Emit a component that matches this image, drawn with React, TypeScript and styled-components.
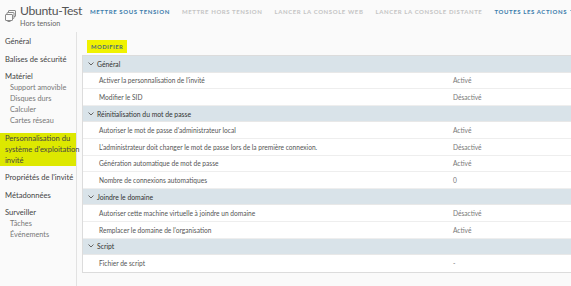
import React from "react"
import styled, { createGlobalStyle } from "styled-components"

const GlobalStyle = createGlobalStyle`
  html, body {
    margin: 0;
    padding: 0;
    background: #fafafa;
    font-family: Lato, "Noto Sans", sans-serif;
    color: #565656;
  }
`

type Row = { label: string; value: string }
type Group = { title: string; rows: Row[] }

const groups: Group[] = [
  {
    title: "Général",
    rows: [
      { label: "Activer la personnalisation de l'invité", value: "Activé" },
      { label: "Modifier le SID", value: "Désactivé" },
    ],
  },
  {
    title: "Réinitialisation du mot de passe",
    rows: [
      { label: "Autoriser le mot de passe d'administrateur local", value: "Activé" },
      { label: "L'administrateur doit changer le mot de passe lors de la première connexion.", value: "Désactivé" },
      { label: "Génération automatique de mot de passe", value: "Activé" },
      { label: "Nombre de connexions automatiques", value: "0" },
    ],
  },
  {
    title: "Joindre le domaine",
    rows: [
      { label: "Autoriser cette machine virtuelle à joindre un domaine", value: "Désactivé" },
      { label: "Remplacer le domaine de l'organisation", value: "Activé" },
    ],
  },
  {
    title: "Script",
    rows: [{ label: "Fichier de script", value: "-" }],
  },
]

const actions = [
  { label: "METTRE SOUS TENSION", active: true },
  { label: "METTRE HORS TENSION", active: false },
  { label: "LANCER LA CONSOLE WEB", active: false },
  { label: "LANCER LA CONSOLE DISTANTE", active: false },
]

const VmIcon = () => (
  <svg width="11" height="12" viewBox="0 0 11 12" fill="none" stroke="#8a8a8a" strokeWidth="1">
    <rect x="3.5" y="0.5" width="7" height="6" rx="0.5" />
    <rect x="2" y="2.5" width="7" height="6" rx="0.5" fill="#fafafa" />
    <rect x="0.5" y="4.5" width="7" height="6" rx="0.5" fill="#fafafa" />
    <line x1="2.5" y1="11.5" x2="5.5" y2="11.5" />
  </svg>
)

const Chevron = ({ color }: { color: string }) => (
  <svg width="6" height="4" viewBox="0 0 6 4" fill="none" stroke={color} strokeWidth="1">
    <polyline points="0.5,0.5 3,3 5.5,0.5" />
  </svg>
)

export default function App() {
  return (
    <S.Page>
      <GlobalStyle />
      <S.Header>
        <S.TitleBlock>
          <S.IconWrap>
            <VmIcon />
          </S.IconWrap>
          <div>
            <S.Title>Ubuntu-Test</S.Title>
            <S.Subtitle>Hors tension</S.Subtitle>
          </div>
        </S.TitleBlock>
        <S.Actions>
          {actions.map((a) => (
            <S.Action key={a.label} active={a.active}>
              {a.label}
            </S.Action>
          ))}
          <S.Action active>
            TOUTES LES ACTIONS <Chevron color="#3b7cab" />
          </S.Action>
        </S.Actions>
      </S.Header>
      <S.Body>
        <S.Sidebar>
          <S.NavItem>Général</S.NavItem>
          <S.NavItem>Balises de sécurité</S.NavItem>
          <S.NavGroup>
            <S.NavItem>Matériel</S.NavItem>
            <S.SubItem>Support amovible</S.SubItem>
            <S.SubItem>Disques durs</S.SubItem>
            <S.SubItem>Calculer</S.SubItem>
            <S.SubItem>Cartes réseau</S.SubItem>
          </S.NavGroup>
          <S.NavItem selected>
            Personnalisation du
            <br />
            système d'exploitation
            <br />
            invité
          </S.NavItem>
          <S.NavItem>Propriétés de l'invité</S.NavItem>
          <S.NavItem>Métadonnées</S.NavItem>
          <S.NavGroup>
            <S.NavItem>Surveiller</S.NavItem>
            <S.SubItem>Tâches</S.SubItem>
            <S.SubItem>Événements</S.SubItem>
          </S.NavGroup>
        </S.Sidebar>
        <S.Content>
          <S.EditButton>MODIFIER</S.EditButton>
          <S.Table>
            {groups.map((g) => (
              <React.Fragment key={g.title}>
                <S.GroupRow>
                  <Chevron color="#666" />
                  <span>{g.title}</span>
                </S.GroupRow>
                {g.rows.map((r) => (
                  <S.DataRow key={r.label}>
                    <S.Label>{r.label}</S.Label>
                    <S.Value>{r.value}</S.Value>
                  </S.DataRow>
                ))}
              </React.Fragment>
            ))}
          </S.Table>
        </S.Content>
      </S.Body>
    </S.Page>
  )
}

const S = {
  Page: styled.div`
    width: 571px;
    height: 286px;
    overflow: hidden;
    background: #fafafa;
  `,
  Header: styled.div`
    display: flex;
    align-items: flex-start;
    height: 32px;
    padding: 3px 0 0 5px;
    box-sizing: border-box;
  `,
  TitleBlock: styled.div`
    display: flex;
    align-items: flex-start;
    gap: 4px;
    width: 85px;
    flex-shrink: 0;
  `,
  IconWrap: styled.div`
    padding-top: 3px;
  `,
  Title: styled.div`
    font-size: 12.2px;
    letter-spacing: -0.35px;
    line-height: 15px;
    color: #555;
    white-space: nowrap;
  `,
  Subtitle: styled.div`
    font-size: 7.2px;
    line-height: 10px;
    margin-top: 1px;
    color: #666;
  `,
  Actions: styled.div`
    display: flex;
    align-items: center;
    gap: 12px;
    padding-top: 5px;
    white-space: nowrap;
  `,
  Action: styled.div<{ active: boolean }>`
    display: flex;
    align-items: center;
    gap: 3px;
    font-size: 6px;
    font-weight: 700;
    letter-spacing: 0.6px;
    color: ${({ active }) => (active ? "#3b7cab" : "#c4c4c4")};
  `,
  Body: styled.div`
    display: flex;
    height: 254px;
  `,
  Sidebar: styled.div`
    width: 77px;
    flex-shrink: 0;
    border-right: 1px solid #e2e2e2;
    padding-top: 4px;
    display: flex;
    flex-direction: column;
    gap: 6.5px;
    box-sizing: border-box;
  `,
  NavGroup: styled.div`
    display: flex;
    flex-direction: column;
  `,
  NavItem: styled.div<{ selected?: boolean }>`
    font-size: 7.6px;
    line-height: 11px;
    white-space: nowrap;
    padding: 0 5px;
    color: #444;
    background: ${({ selected }) => (selected ? "#dde800" : "transparent")};
  `,
  SubItem: styled.div`
    font-size: 7.3px;
    line-height: 11px;
    padding-left: 10px;
    color: #777;
  `,
  Content: styled.div`
    flex: 1;
    padding: 8px 0 0 5px;
    display: flex;
    flex-direction: column;
    align-items: flex-start;
  `,
  EditButton: styled.div`
    margin-left: 5px;
    background: #f0f200;
    color: #4a6b78;
    font-size: 5.8px;
    font-weight: 700;
    letter-spacing: 0.5px;
    padding: 3px 4px;
    line-height: 7px;
  `,
  Table: styled.div`
    margin-top: 2px;
    width: 100%;
    border: 1px solid #dcdcdc;
    border-right: none;
    background: #fff;
  `,
  GroupRow: styled.div`
    display: flex;
    align-items: center;
    gap: 3px;
    height: 16.6px;
    padding-left: 5px;
    background: #d9e3e9;
    font-size: 6.8px;
    color: #333;
    border-bottom: 1px solid #e8e8e8;
    box-sizing: border-box;
  `,
  DataRow: styled.div`
    display: flex;
    align-items: center;
    height: 16.6px;
    padding-left: 16px;
    border-bottom: 1px solid #eeeeee;
    box-sizing: border-box;
    font-size: 6.6px;
    &:last-child {
      border-bottom: none;
    }
  `,
  Label: styled.div`
    width: 354px;
    color: #555;
    white-space: nowrap;
  `,
  Value: styled.div`
    color: #777;
  `,
}
